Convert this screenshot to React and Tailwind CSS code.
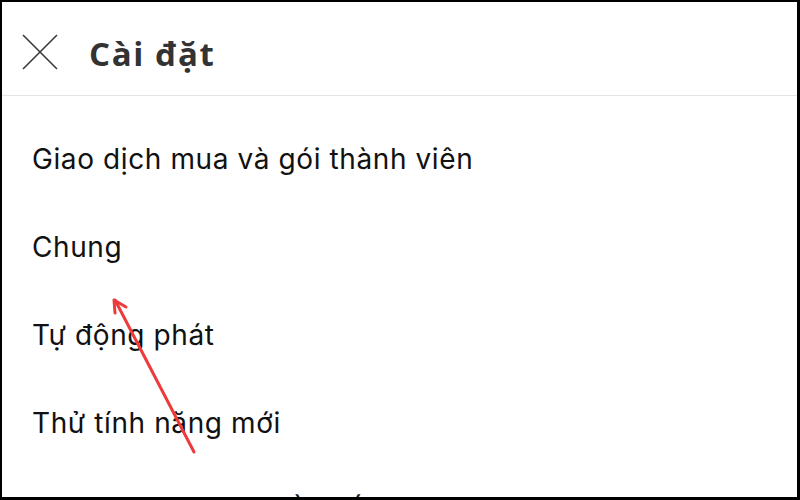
import React from 'react';

const items = [
  'Giao dịch mua và gói thành viên',
  'Chung',
  'Tự động phát',
  'Thử tính năng mới',
  'Lựa chọn ưu tiên về chất lượng video',
];

const App = () => {
  return (
    <div className="relative w-[800px] h-[500px] overflow-hidden bg-white border-black border-l-2 border-t-2 border-r-[3px] border-b-[3px]">
      {/* Header */}
      <div className="flex items-center h-[94px] border-b border-[#e4e4e4]">
        <svg className="ml-[20px] mt-[6px]" width="36" height="36" viewBox="0 0 36 36" fill="none">
          <path d="M1 1L35 35M35 1L1 35" stroke="#3a3a3a" strokeWidth="1.6" />
        </svg>
        <h1 className="ml-[31px] mt-[9px] text-[33px] tracking-[1.6px] font-bold text-[#333] font-['Open_Sans',sans-serif] leading-none">
          Cài đặt
        </h1>
      </div>

      {/* Settings list */}
      <div className="pt-[19px]">
        {items.map((label) => (
          <div
            key={label}
            className="h-[88px] leading-[88px] pl-[30px] text-[28px] tracking-[0.6px] text-[#111] font-['Inter',sans-serif] whitespace-nowrap"
          >
            {label}
          </div>
        ))}
      </div>

      {/* Annotation arrow */}
      <svg className="absolute left-0 top-0 pointer-events-none" width="800" height="500" viewBox="-2 -2 800 500" fill="none">
        <path d="M190 448L111 296" stroke="#ee3a3a" strokeWidth="3" strokeLinecap="round" />
        <path d="M122 303L110 296L111 309" stroke="#ee3a3a" strokeWidth="3" strokeLinecap="round" strokeLinejoin="round" />
      </svg>
    </div>
  );
};

export default App;
